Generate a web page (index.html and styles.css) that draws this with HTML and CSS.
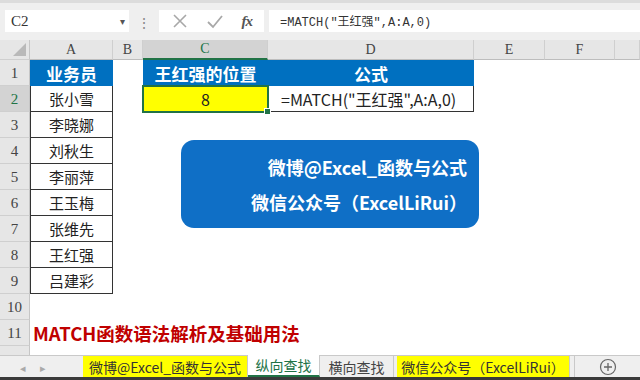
FILE: index.html
```html
<!DOCTYPE html>
<html>
<head>
  <title>MATCH函数</title>
  <link rel="stylesheet" href="styles.css">
</head>
<body>
  <div class="app">
    <!-- formula bar -->
    <div class="toolbar">
      <div class="namebox"><span>C2</span><span class="drop">▾</span></div>
      <div class="grip">⋮</div>
      <div class="fxbox">
        <svg width="18" height="18" viewBox="0 0 18 18"><path d="M3 3 L15 15 M15 3 L3 15" stroke="#a8a8a8" stroke-width="1.6" fill="none"/></svg>
        <svg width="20" height="18" viewBox="0 0 20 18"><path d="M3 10 L8 15 L17 4" stroke="#a8a8a8" stroke-width="1.8" fill="none"/></svg>
        <span class="fx">fx</span>
      </div>
      <div class="formula">=MATCH("王红强",A:A,0)</div>
    </div>

    <!-- sheet -->
    <div class="sheet">
      <div class="row head">
        <div class="rh corner"><span class="tri"></span></div>
        <div class="ch">A</div><div class="ch">B</div><div class="ch sel">C</div><div class="ch">D</div><div class="ch">E</div><div class="ch">F</div><div class="ch"></div>
      </div>
      <div class="row">
        <div class="rh">1</div>
        <div class="c blue">业务员</div><div class="c"></div><div class="c blue">王红强的位置</div><div class="c blue">公式</div><div class="c"></div><div class="c"></div><div class="c"></div>
      </div>
      <div class="row">
        <div class="rh sel">2</div>
        <div class="c name">张小雪</div><div class="c"></div><div class="c yellow active">8</div><div class="c boxed left">=MATCH("王红强",A:A,0)</div><div class="c"></div><div class="c"></div><div class="c"></div>
      </div>
      <div class="row">
        <div class="rh">3</div>
        <div class="c name">李晓娜</div><div class="c"></div><div class="c"></div><div class="c"></div><div class="c"></div><div class="c"></div><div class="c"></div>
      </div>
      <div class="row">
        <div class="rh">4</div>
        <div class="c name">刘秋生</div><div class="c"></div><div class="c"></div><div class="c"></div><div class="c"></div><div class="c"></div><div class="c"></div>
      </div>
      <div class="row">
        <div class="rh">5</div>
        <div class="c name">李丽萍</div><div class="c"></div><div class="c"></div><div class="c"></div><div class="c"></div><div class="c"></div><div class="c"></div>
      </div>
      <div class="row">
        <div class="rh">6</div>
        <div class="c name">王玉梅</div><div class="c"></div><div class="c"></div><div class="c"></div><div class="c"></div><div class="c"></div><div class="c"></div>
      </div>
      <div class="row">
        <div class="rh">7</div>
        <div class="c name">张维先</div><div class="c"></div><div class="c"></div><div class="c"></div><div class="c"></div><div class="c"></div><div class="c"></div>
      </div>
      <div class="row">
        <div class="rh">8</div>
        <div class="c name">王红强</div><div class="c"></div><div class="c"></div><div class="c"></div><div class="c"></div><div class="c"></div><div class="c"></div>
      </div>
      <div class="row">
        <div class="rh">9</div>
        <div class="c name">吕建彩</div><div class="c"></div><div class="c"></div><div class="c"></div><div class="c"></div><div class="c"></div><div class="c"></div>
      </div>
      <div class="row">
        <div class="rh">10</div>
        <div class="c"></div><div class="c"></div><div class="c"></div><div class="c"></div><div class="c"></div><div class="c"></div><div class="c"></div>
      </div>
      <div class="row">
        <div class="rh">11</div>
        <div class="c title">MATCH函数语法解析及基础用法</div><div class="c"></div><div class="c"></div><div class="c"></div><div class="c"></div><div class="c"></div><div class="c"></div>
      </div>
      <div class="row">
        <div class="rh"></div>
        <div class="c"></div><div class="c"></div><div class="c"></div><div class="c"></div><div class="c"></div><div class="c"></div><div class="c"></div>
      </div>

      <!-- floating shape -->
      <div class="note">
        <div>微博@Excel_函数与公式</div>
        <div>微信公众号（ExcelLiRui）</div>
      </div>
    </div>

    <!-- sheet tabs -->
    <div class="tabs">
      <div class="nav"><span>◂</span><span>▸</span></div>
      <div class="tab hl">微博@Excel_函数与公式</div>
      <div class="tab on">纵向查找</div>
      <div class="tab">横向查找</div>
      <div class="tab hl wide">微信公众号（ExcelLiRui）</div>
      <div class="add">
        <svg width="18" height="18" viewBox="0 0 18 18"><circle cx="9" cy="9" r="7.5" stroke="#666" stroke-width="1.2" fill="none"/><path d="M9 5 V13 M5 9 H13" stroke="#666" stroke-width="1.3"/></svg>
      </div>
    </div>
  </div>
</body>
</html>
```

FILE: styles.css
```css
body {
  margin: 0;
  width: 640px;
  height: 380px;
  overflow: hidden;
  background-color: #fff;
  font-family: "Noto Sans CJK SC", "Noto Sans", sans-serif;
}

.app {
  display: flex;
  flex-direction: column;
  height: 380px;
}

/* Formula bar */
.toolbar {
  height: 40px;
  box-sizing: border-box;
  display: flex;
  align-items: flex-start;
  padding: 10px 0 0 5px;
  background-color: #efefef;
  border-top: 3px solid #dcdcdc;
}

.namebox {
  width: 124px;
  height: 22px;
  margin-top: -3px;
  box-sizing: border-box;
  background-color: #fff;
  display: flex;
  align-items: center;
  justify-content: space-between;
  padding: 0 4px 0 6px;
  font-family: "Liberation Serif", serif;
  font-size: 15px;
  color: #333;
}

.drop {
  font-size: 10px;
  color: #555;
}

.grip {
  width: 30px;
  margin-top: -1px;
  text-align: center;
  color: #888;
  font-size: 14px;
}

.fxbox {
  width: 105px;
  height: 22px;
  margin-top: -3px;
  background-color: #fff;
  display: flex;
  align-items: center;
  justify-content: space-around;
  padding: 0 4px;
  box-sizing: border-box;
}

.fx {
  font-family: "Liberation Serif", serif;
  font-style: italic;
  font-weight: bold;
  font-size: 15px;
  color: #555;
  letter-spacing: -1px;
}

.formula {
  flex: 1;
  height: 22px;
  margin: -3px 0 0 5px;
  background-color: #fff;
  box-sizing: border-box;
  padding: 2px 0 0 11px;
  font-family: "Liberation Mono", "Noto Sans CJK SC", monospace;
  font-size: 12px;
  color: #333;
}

/* Sheet grid */
.sheet {
  position: relative;
  height: 315px;
  overflow: hidden;
}

.row {
  display: grid;
  grid-template-columns: 30px 83px 30px 125px 206px 71px 70px 25px;
  height: 26px;
}

.row.head {
  height: 20px;
}

.rh {
  background-color: #e6e6e6;
  border-bottom: 1px solid #cfcfcf;
  border-right: 1px solid #c6c6c6;
  box-sizing: border-box;
  font-family: "Liberation Serif", serif;
  font-size: 15px;
  color: #444;
  display: flex;
  align-items: center;
  justify-content: center;
  padding-top: 2px;
}

.rh.sel {
  background-color: #d3d3d3;
  color: #217346;
}

.corner {
  position: relative;
}

.tri {
  position: absolute;
  right: 3px;
  bottom: 3px;
  width: 0;
  height: 0;
  border-left: 13px solid transparent;
  border-bottom: 13px solid #b9b9b9;
}

.ch {
  background-color: #e6e6e6;
  border-right: 1px solid #cfcfcf;
  border-bottom: 1px solid #bdbdbd;
  box-sizing: border-box;
  font-family: "Liberation Serif", serif;
  font-size: 14px;
  color: #444;
  display: flex;
  align-items: center;
  justify-content: center;
}

.ch.sel {
  background-color: #d3d3d3;
  color: #217346;
  border-bottom: 2px solid #217346;
}

.c {
  box-sizing: border-box;
  display: flex;
  align-items: center;
  justify-content: center;
  font-size: 16px;
  color: #222;
  white-space: nowrap;
}

.c.blue {
  background-color: #0070c0;
  color: #fff;
  font-weight: bold;
  font-size: 17px;
}

.c.name {
  font-size: 15px;
  border: 1px solid #333;
  border-top: none;
}

.c.yellow {
  background-color: #ffff00;
}

.c.boxed {
  border-right: 1px solid #333;
  border-bottom: 1px solid #333;
}

.c.left {
  justify-content: flex-start;
  padding-left: 13px;
}

.c.active {
  position: relative;
  border: 1px solid #217346;
  outline: 1px solid #217346;
}

.c.active::after {
  content: "";
  position: absolute;
  right: -4px;
  bottom: -4px;
  width: 5px;
  height: 5px;
  background-color: #217346;
  border: 1px solid #fff;
}

.c.title {
  justify-content: flex-start;
  padding-left: 3px;
  overflow: visible;
  color: #c00000;
  font-weight: bold;
  font-size: 18.5px;
}

/* Floating text box */
.note {
  position: absolute;
  left: 181px;
  top: 100px;
  width: 298px;
  height: 88px;
  box-sizing: border-box;
  background-color: #0f6fc6;
  border-radius: 13px;
  display: flex;
  flex-direction: column;
  justify-content: center;
  align-items: flex-end;
  gap: 9px;
  padding-right: 12px;
  color: #fff;
  font-weight: bold;
  font-size: 18px;
  line-height: 26px;
}

/* Sheet tabs */
.tabs {
  flex: 1;
  display: flex;
  align-items: stretch;
  background-color: #efefef;
  border-top: 1px solid #c9c9c9;
  border-bottom: 3px solid #3a3a3a;
}

.nav {
  width: 83px;
  display: flex;
  justify-content: flex-start;
  gap: 14px;
  padding-left: 20px;
  box-sizing: border-box;
  align-items: center;
  color: #aaa;
  font-size: 11px;
}

.tab {
  width: 74px;
  display: flex;
  align-items: center;
  justify-content: center;
  font-size: 14px;
  color: #444;
  border-right: 1px solid #c9c9c9;
  box-sizing: border-box;
}

.tab.hl {
  width: 165px;
  background-color: #ffff00;
  color: #333;
}

.tab.wide {
  width: 173px;
  margin-left: 3px;
}

.tab.on {
  width: 72px;
  background-color: #fff;
  color: #217346;
  border-bottom: 2px solid #217346;
  margin-top: -1px;
}

.add {
  flex: 1;
  display: flex;
  align-items: center;
  padding-left: 24px;
  border-left: 1px solid #c9c9c9;
  margin-left: 4px;
}
```
